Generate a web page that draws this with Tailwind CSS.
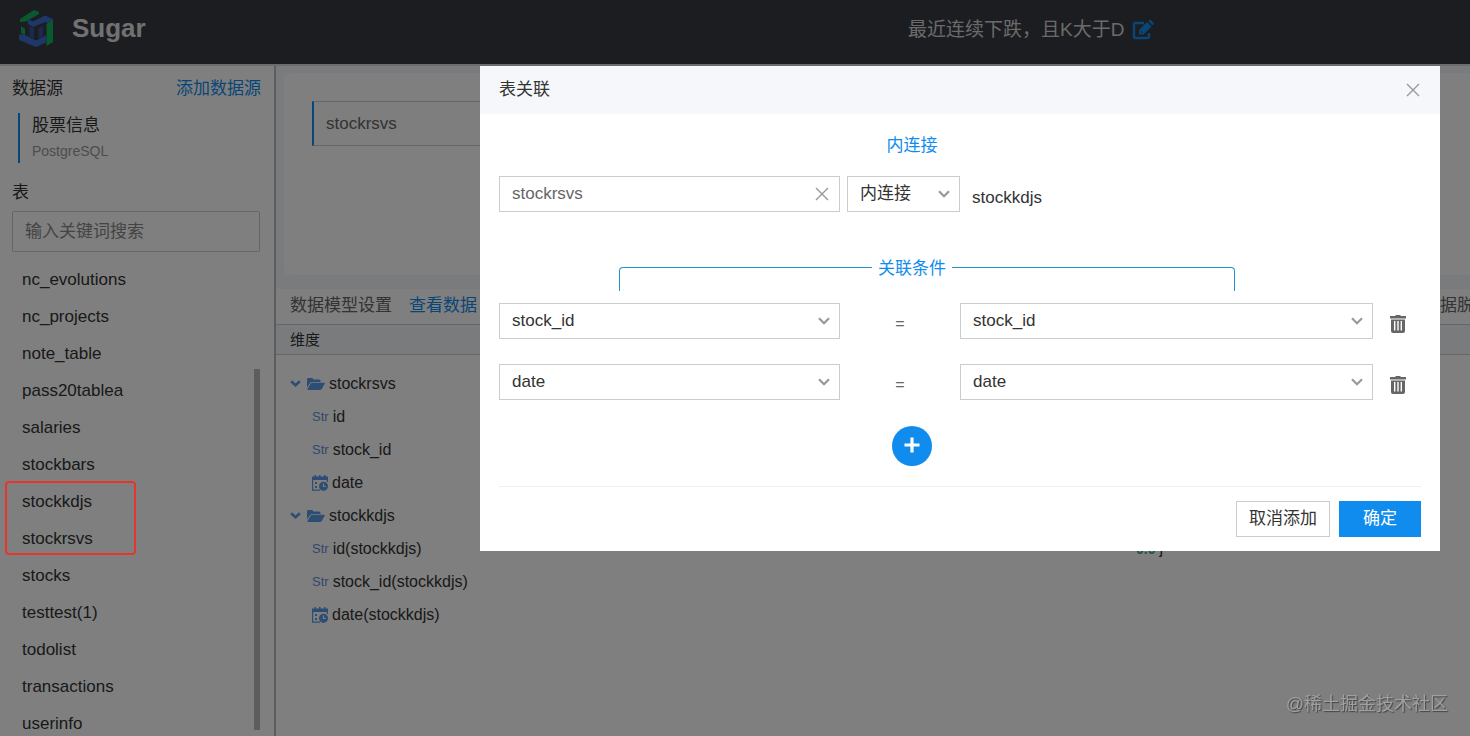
<!DOCTYPE html>
<html lang="zh-CN">
<head>
  <meta charset="UTF-8"/>
  <meta name="viewport" content="width=device-width, initial-scale=1.0"/>
  <title>Sugar</title>
  <script src="https://cdn.jsdelivr.net/npm/@tailwindcss/browser@4"></script>
</head>
<body class="h-screen overflow-hidden bg-white text-[17px] leading-6 text-[#333] font-['Liberation_Sans','Noto_Sans_CJK_SC',sans-serif]">

  <!-- Shared icons -->
  <svg class="hidden">
    <symbol id="chevron" viewBox="0 0 12 8"><path d="M1 1.2l5 5 5-5" fill="none" stroke="currentColor" stroke-width="2.2"/></symbol>
    <symbol id="caret" viewBox="0 0 12 8"><path d="M1 1.500l5 4.500 5-4.500" fill="none" stroke="currentColor" stroke-width="3"/></symbol>
    <symbol id="close" viewBox="0 0 14 14"><path d="M1 1l12 12M13 1L1 13" fill="none" stroke="currentColor" stroke-width="1.4"/></symbol>
    <symbol id="folder" viewBox="0 0 18 12"><path d="M0 9.500V1.200Q0 0 1.200 0h3.900q1 0 1 1v.6h6.200q1.200 0 1.200 1.200V4H5.200Q4 4 3.200 5z" fill="currentColor"/><path d="M.3 11.600L3.600 5.800q.7-1.100 2-1.100h11.400q1.300 0 .7 1.100l-2.600 4.800q-.8 1.300-2 1.300H.8q-.7 0-.5-.3z" fill="currentColor"/></symbol>
    <symbol id="calendar" viewBox="0 0 16 16"><path d="M0 1.500h2.500V0H4v1.500h3V0h1.500v1.500H12V0h1.500v1.500H16V5H0z" fill="currentColor"/><path d="M.6 5v10.200H8M15.400 5v2" fill="none" stroke="currentColor" stroke-width="1.200"/><path d="M3 7h2v2H3zM3 11h2v2H3z" fill="currentColor"/><circle cx="11.500" cy="11.300" r="4.500" fill="currentColor"/><path d="M11.500 8.500v3h2.300" fill="none" stroke="#fff" stroke-width="1.200"/></symbol>
    <symbol id="trash" viewBox="0 0 16 18"><path d="M5.500 0h5v1H16v2.500H0V1h5.500z" fill="currentColor"/><path d="M1 4.500h14V16q0 2-2 2H3q-2 0-2-2z" fill="currentColor"/><path d="M4.700 6v9.500M8 6v9.500M11.300 6v9.500" stroke="#fff" stroke-width="1.400"/></symbol>
  </svg>

  <div class="flex h-full flex-col">
    <!-- Top bar -->
    <header class="flex h-[66px] shrink-0 items-center border-b-2 border-[#d9d9df] bg-[#383a42] pb-2 pl-[18px]">
      <div class="flex w-[890px] items-center gap-[18px]">
        <svg class="h-[38px] w-9" viewBox="0 0 36 38">
          <path d="M2 10L16 1l5 2v2L8 12.500 2 13z" fill="#12b35e"/>
          <path d="M10 10l5 2.500 12-6 8 3.500v2l-5 2-3-1-12 5-5-3z" fill="#3c6fd0"/>
          <path d="M28.500 15l6.500-4v22l-6.500 4z" fill="#12b35e"/>
          <path d="M3 17l4 3v6l-4-2z" fill="#12b35e"/>
          <path d="M1 25.500h5l12 6 10-5v7L18 38 1 31z" fill="#3c6fd0"/>
          <path d="M11.500 17l4.500 2.500V30l-4.500-3zM25 17l-4.500 2.500V30l4.500-3z" fill="#35559f"/>
        </svg>
        <span class="text-[26px] font-bold text-[#e2e2e2]">Sugar</span>
      </div>
      <div class="flex items-center gap-2 pt-1 text-[19px] text-[#d5d5d5]">
        <h1>最近连续下跌，且K大于D</h1>
        <button class="text-[#108cee]" aria-label="编辑">
          <svg class="h-5 w-[22px]" viewBox="0 0 22 20"><path d="M12 3H3.500Q2 3 2 4.500v12Q2 18 3.500 18h12q1.500 0 1.500-1.500V13" fill="none" stroke="currentColor" stroke-width="2.400"/><path d="M7 10L15 2l4.500 4.500-8 8H7zM16.200 1L17.200 0q.8-.6 1.600 0L21.500 2.700q.6.800 0 1.600l-1 1z" fill="currentColor"/><path d="M8.500 11l2 2" stroke="#383a42"/></svg>
        </button>
      </div>
    </header>

    <div class="flex min-h-0 grow">
      <!-- Sidebar -->
      <aside class="relative flex w-[276px] shrink-0 flex-col border-r-2 border-[#b8babd]">
        <div class="flex justify-between pt-[11px] pr-[13px] pl-3">
          <h2>数据源</h2>
          <a href="#" class="text-[#108cee]">添加数据源</a>
        </div>
        <div class="mt-3 ml-[18px] border-l-2 border-[#108cee] pl-3">
          <p class="pt-px">股票信息</p>
          <p class="pt-px text-[14px] leading-6 text-[#999]">PostgreSQL</p>
        </div>
        <label for="search" class="mt-[18px] pl-3">表</label>
        <input id="search" type="text" placeholder="输入关键词搜索" class="mt-[6px] mr-[14px] ml-3 h-[41px] shrink-0 rounded-[2px] border border-[#ccc] px-3 placeholder:text-[#888]"/>
        <ul class="mt-[9px] min-h-0 overflow-hidden pl-[22px] leading-[37px]">
          <li>nc_evolutions</li>
          <li>nc_projects</li>
          <li>note_table</li>
          <li>pass20tablea</li>
          <li>salaries</li>
          <li>stockbars</li>
          <li>stockkdjs</li>
          <li>stockrsvs</li>
          <li>stocks</li>
          <li>testtest(1)</li>
          <li>todolist</li>
          <li>transactions</li>
          <li>userinfo</li>
        </ul>
        <div class="absolute right-[14px] bottom-[6px] h-[361px] w-[6px] bg-[#bbb]"></div>
      </aside>

      <!-- Data model -->
      <main class="min-w-0 grow overflow-hidden">
        <div class="bg-[#f5f7fa] pt-[7px] pb-[14px] pl-2">
          <div class="h-[202px] rounded-l-md bg-white px-7 pt-7">
            <div class="w-[220px] border border-l-2 border-[#ccc] border-l-[#108cee] bg-[#fdfdfd] pl-3 leading-[43px] text-[#666]">stockrsvs</div>
          </div>
        </div>
        <div class="flex h-9 items-center justify-between border-b border-[#ccc] pb-[2px] pl-[14px] whitespace-nowrap text-[#666]">
          <div class="flex gap-[17px]">
            <span>数据模型设置</span>
            <a href="#" class="text-[#108cee]">查看数据</a>
          </div>
          <span class="-mr-[21px]">数据脱敏</span>
        </div>
        <div class="border-b border-[#ccc] bg-[#f5f7fa] pl-[14px] text-[15px] leading-[29px]">维度</div>

        <div class="flex text-base">
          <ul class="w-[860px] pt-3 pl-[14px] leading-[33px]">
            <li class="flex items-center">
              <svg class="mr-[6px] h-[7px] w-[11px] text-[#5a9ae6]"><use href="#caret"/></svg>
              <svg class="mr-1 h-3 w-[18px] text-[#5a9ae6]"><use href="#folder"/></svg>stockrsvs
            </li>
            <li class="flex items-center gap-1 pl-[22px]"><span class="text-[13px] text-[#6590dc]">Str</span>id</li>
            <li class="flex items-center gap-1 pl-[22px]"><span class="text-[13px] text-[#6590dc]">Str</span>stock_id</li>
            <li class="flex items-center gap-1 pl-[22px]"><svg class="size-4 text-[#5a9ae6]"><use href="#calendar"/></svg>date</li>
            <li class="flex items-center">
              <svg class="mr-[6px] h-[7px] w-[11px] text-[#5a9ae6]"><use href="#caret"/></svg>
              <svg class="mr-1 h-3 w-[18px] text-[#5a9ae6]"><use href="#folder"/></svg>stockkdjs
            </li>
            <li class="flex items-center gap-1 pl-[22px]"><span class="text-[13px] text-[#6590dc]">Str</span>id(stockkdjs)</li>
            <li class="flex items-center gap-1 pl-[22px]"><span class="text-[13px] text-[#6590dc]">Str</span>stock_id(stockkdjs)</li>
            <li class="flex items-center gap-1 pl-[22px]"><svg class="size-4 text-[#5a9ae6]"><use href="#calendar"/></svg>date(stockkdjs)</li>
          </ul>
          <ul class="pt-[177px] leading-[33px]">
            <li class="flex items-center gap-1"><span class="text-sm font-bold text-[#3fae85]">0.0</span>j</li>
          </ul>
        </div>
      </main>
    </div>
  </div>

  <!-- Join dialog -->
  <div class="fixed inset-0 flex items-start justify-end bg-black/50 pt-[66px] pr-[30px]">
    <div role="dialog" aria-labelledby="dialog-title" class="w-[960px] max-w-full bg-white">
      <div class="flex h-12 items-center justify-between bg-[#f5f7fa] pr-5 pl-[19px]">
        <h2 id="dialog-title">表关联</h2>
        <button class="text-[#999]" aria-label="关闭"><svg class="size-[14px]"><use href="#close"/></svg></button>
      </div>

      <form class="px-[19px] pt-5 pb-[14px]">
        <p class="pr-24 text-center text-[#108cee]">内连接</p>

        <div class="mt-[18px] flex">
          <div class="relative w-[341px]">
            <input type="text" value="stockrsvs" aria-label="左表" class="h-9 w-full border border-[#ccc] px-3 text-[#666]"/>
            <button type="button" aria-label="清除" class="absolute top-[11px] right-[11px] text-[#999]"><svg class="size-[14px]"><use href="#close"/></svg></button>
          </div>
          <div class="relative ml-[7px] w-[113px]">
            <select aria-label="连接方式" class="h-9 w-full appearance-none border border-[#ccc] px-3"><option>内连接</option></select>
            <svg class="pointer-events-none absolute top-[14px] right-[10px] h-2 w-3 text-[#999]"><use href="#chevron"/></svg>
          </div>
          <span class="self-end pb-[2px] pl-3">stockkdjs</span>
        </div>

        <div class="mt-[45px] mr-[186px] ml-[120px] flex h-[34px] gap-[6px] text-[#108cee]">
          <div class="mt-[10px] h-6 basis-0 grow-253 rounded-tl-[4px] border-t border-l border-[#2a90cc]"></div>
          <span>关联条件</span>
          <div class="mt-[10px] h-6 basis-0 grow-283 rounded-tr-[4px] border-t border-r border-[#2a90cc]"></div>
        </div>

        <div class="mt-3 space-y-[25px]">
          <div class="grid grid-cols-[341fr_120fr_413fr_48px] items-center">
            <div class="relative">
              <select aria-label="左表字段" class="h-9 w-full appearance-none border border-[#ccc] px-3"><option>stock_id</option></select>
              <svg class="pointer-events-none absolute top-[14px] right-[10px] h-2 w-3 text-[#999]"><use href="#chevron"/></svg>
            </div>
            <span class="pt-[6px] text-center text-base text-[#666]">=</span>
            <div class="relative">
              <select aria-label="右表字段" class="h-9 w-full appearance-none border border-[#ccc] px-3"><option>stock_id</option></select>
              <svg class="pointer-events-none absolute top-[14px] right-[10px] h-2 w-3 text-[#999]"><use href="#chevron"/></svg>
            </div>
            <button type="button" aria-label="删除" class="ml-[17px] pt-[6px] text-[#666]"><svg class="h-[18px] w-4"><use href="#trash"/></svg></button>
          </div>
          <div class="grid grid-cols-[341fr_120fr_413fr_48px] items-center">
            <div class="relative">
              <select aria-label="左表字段" class="h-9 w-full appearance-none border border-[#ccc] px-3"><option>date</option></select>
              <svg class="pointer-events-none absolute top-[14px] right-[10px] h-2 w-3 text-[#999]"><use href="#chevron"/></svg>
            </div>
            <span class="pt-[6px] text-center text-base text-[#666]">=</span>
            <div class="relative">
              <select aria-label="右表字段" class="h-9 w-full appearance-none border border-[#ccc] px-3"><option>date</option></select>
              <svg class="pointer-events-none absolute top-[14px] right-[10px] h-2 w-3 text-[#999]"><use href="#chevron"/></svg>
            </div>
            <button type="button" aria-label="删除" class="ml-[17px] pt-[6px] text-[#666]"><svg class="h-[18px] w-4"><use href="#trash"/></svg></button>
          </div>
        </div>

        <div class="mt-[26px] flex justify-center pr-24">
          <button type="button" aria-label="添加条件" class="flex size-10 items-center justify-center rounded-full bg-[#108cee] pb-[2px] text-white">
            <svg class="size-4" viewBox="0 0 16 16"><path d="M8 .5v15M.5 8h15" stroke="currentColor" stroke-width="3.200"/></svg>
          </button>
        </div>

        <div class="mt-5 flex justify-end gap-[9px] border-t border-[#eee] pt-[14px]">
          <button type="button" class="h-9 w-[94px] border border-[#ccc]">取消添加</button>
          <button type="submit" class="h-9 w-[82px] bg-[#108cee] text-white">确定</button>
        </div>
      </form>
    </div>
  </div>

  <!-- Marker around the joined tables -->
  <div class="pointer-events-none absolute top-[481px] left-[5px] h-[74px] w-[131px] rounded-[4px] border-2 border-[#e8352b]"></div>
  <p class="pointer-events-none absolute right-[22px] bottom-[18px] text-lg text-[#a0a0a0] [text-shadow:1px_1px_1px_#444]">@稀土掘金技术社区</p>

</body>
</html>
